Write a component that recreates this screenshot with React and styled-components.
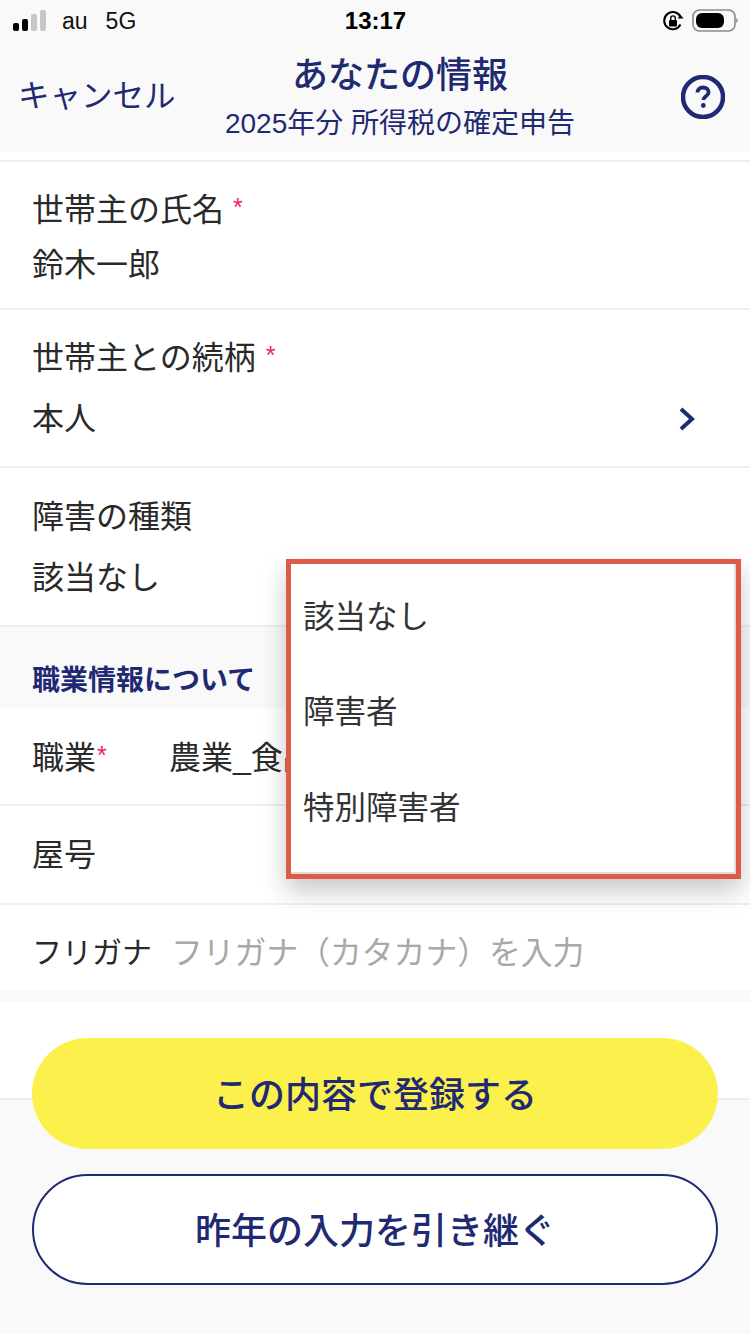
import React from 'react';
import styled, { createGlobalStyle } from 'styled-components';

const navy = '#1f2a72';

const GlobalStyle = createGlobalStyle`
  html, body {
    margin: 0;
    padding: 0;
    background: #f9f9f9;
  }
  body {
    font-family: "Liberation Sans", "Noto Sans CJK JP", sans-serif;
    color: #222;
  }
`;

const Phone = styled.div`
  position: relative;
  width: 750px;
  height: 1334px;
  overflow: hidden;
  background: #f9f9f9;
`;

const StatusBar = styled.div`
  height: 42px;
  padding: 0 12px 0 13px;
  display: grid;
  grid-template-columns: 1fr auto 1fr;
  align-items: center;
`;

const StatusLeft = styled.div`
  display: flex;
  align-items: center;
  font-size: 23px;
  color: #111;
`;

const Carrier = styled.span`
  margin-left: 15px;
`;

const Network = styled.span`
  margin-left: 18px;
`;

const Clock = styled.div`
  font-size: 24px;
  font-weight: 700;
  color: #000;
`;

const StatusRight = styled.div`
  display: flex;
  align-items: center;
  justify-content: flex-end;
  gap: 8px;
`;

const NavBar = styled.div`
  position: relative;
  height: 110px;
`;

const Cancel = styled.div`
  position: absolute;
  left: 18px;
  top: 32px;
  font-size: 31.5px;
  line-height: 44px;
  color: ${navy};
`;

const Titles = styled.div`
  display: flex;
  flex-direction: column;
  align-items: center;
  text-align: center;
  padding-left: 50px;
`;

const Title = styled.div`
  margin-top: 11px;
  font-size: 36px;
  line-height: 46px;
  font-weight: 500;
  color: ${navy};
`;

const Subtitle = styled.div`
  margin-top: 6px;
  font-size: 28px;
  line-height: 38px;
  color: ${navy};
`;

const HelpButton = styled.div`
  position: absolute;
  right: 25px;
  top: 33px;
  width: 44px;
  height: 44px;
`;

const Gap = styled.div`
  height: ${(p) => p.$h}px;
  background: ${(p) => p.$bg || '#fff'};
`;

const Field = styled.div`
  height: ${(p) => p.$h}px;
  padding: 0 32px;
  background: #fff;
  border-top: 2px solid #eeeeee;
  display: flex;
  flex-direction: column;
`;

const FieldLabel = styled.div`
  margin-top: ${(p) => p.$top}px;
  font-size: 32px;
  line-height: 44px;
  color: #2a2a2a;
`;

const FieldValue = styled.div`
  margin-top: ${(p) => p.$top}px;
  font-size: 32px;
  line-height: 44px;
  color: #2a2a2a;
  display: flex;
  align-items: center;
  justify-content: space-between;
`;

const Required = styled.span`
  color: #e8285f;
  font-size: 25px;
  margin-left: ${(p) => p.$gap}px;
  position: relative;
  top: -5px;
`;

const Chevron = styled.svg`
  width: 18px;
  height: 24px;
  margin-right: 22px;
`;

const SectionHead = styled.div`
  height: 81px;
  padding: 0 32px;
  border-top: 2px solid #eeeeee;
  background: #f9f9f9;
  display: flex;
  align-items: flex-end;
  font-size: 28px;
  line-height: 40px;
  font-weight: 700;
  color: ${navy};
`;

const HeadText = styled.span`
  margin-bottom: 7px;
`;

const InlineField = styled.div`
  box-sizing: border-box;
  height: ${(p) => p.$h}px;
  padding: ${(p) => p.$pt || 0}px 32px ${(p) => p.$pb || 0}px;
  background: #fff;
  border-top: ${(p) => (p.$first ? 'none' : '2px solid #eeeeee')};
  display: flex;
  align-items: center;
  font-size: 32px;
  color: #2a2a2a;
`;

const InlineLabel = styled.div`
  width: ${(p) => p.$w}px;
  flex: none;
  white-space: nowrap;
  font-size: ${(p) => p.$size || 32}px;
`;

const Placeholder = styled.div`
  color: #a8a8a8;
  font-size: 31.8px;
  white-space: nowrap;
`;

const Value = styled.div`
  white-space: nowrap;
`;

const Footer = styled.div`
  height: 234px;
  border-top: 2px solid #eeeeee;
  background: #f9f9f9;
`;

const Actions = styled.div`
  position: absolute;
  left: 32px;
  right: 32px;
  top: 1038px;
  display: flex;
  flex-direction: column;
  gap: 25px;
`;

const ActionButton = styled.div`
  box-sizing: border-box;
  height: 111px;
  padding-bottom: 3px;
  border-radius: 56px;
  background: ${(p) => (p.$primary ? '#fcf04d' : '#fff')};
  border: ${(p) => (p.$primary ? 'none' : `2px solid ${navy}`)};
  display: flex;
  align-items: center;
  justify-content: center;
  font-size: 36px;
  font-weight: 500;
  color: ${navy};
`;

const Popup = styled.div`
  position: absolute;
  left: 286px;
  top: 559px;
  width: 455px;
  height: 320px;
  box-sizing: border-box;
  border: 5px solid #dc5c48;
  background: #fff;
  box-shadow: 0 12px 24px rgba(0, 0, 0, 0.22), inset -2px -2px 0 #dddddd;
  padding: 2px 0 0 12px;
  display: flex;
  flex-direction: column;
`;

const PopupItem = styled.div`
  height: 95.5px;
  display: flex;
  align-items: center;
  font-size: 31.5px;
  color: #333;
`;

const SignalBars = () => (
  <svg width="34" height="22" viewBox="0 0 34 22">
    <rect x="0" y="13" width="6" height="8" rx="2" fill="#000" />
    <rect x="9" y="9" width="6" height="12" rx="2" fill="#000" />
    <rect x="18" y="4" width="6" height="17" rx="2" fill="#c6c6c6" />
    <rect x="27" y="0" width="6" height="21" rx="2" fill="#c6c6c6" />
  </svg>
);

const RotationLock = () => (
  <svg width="22" height="22" viewBox="0 0 22 22">
    <path d="M18.5 14.5A8.6 8.6 0 1 1 18.6 7" fill="none" stroke="#000" strokeWidth="2" />
    <path d="M15.6 8.6h6l-3-3.6z" fill="#000" />
    <rect x="7" y="10" width="8" height="6.5" rx="1" fill="#000" />
    <path d="M8.7 10V8.2a2.3 2.3 0 0 1 4.6 0V10" fill="none" stroke="#000" strokeWidth="1.4" />
  </svg>
);

const Battery = () => (
  <svg width="46" height="24" viewBox="0 0 46 24">
    <rect x="1" y="1" width="42" height="21" rx="6.5" fill="none" stroke="#8c8c8c" strokeWidth="1.6" />
    <rect x="4" y="4" width="28" height="15" rx="6" fill="#000" />
    <path d="M44.2 9c1 .4 1.500 1.400 1.500 2.500s-.5 2.100-1.500 2.500z" fill="#8c8c8c" />
  </svg>
);

const HelpIcon = () => (
  <HelpButton>
    <svg width="44" height="44" viewBox="0 0 44 44">
      <circle cx="22" cy="22" r="20" fill="none" stroke={navy} strokeWidth="4.5" />
      <path
        d="M16.500 17.500c0-3 2.300-5 5.500-5s5.600 1.900 5.600 4.700c0 3.900-5.300 4.100-5.300 7.800"
        fill="none"
        stroke={navy}
        strokeWidth="3.800"
      />
      <circle cx="22.300" cy="30.500" r="2.400" fill={navy} />
    </svg>
  </HelpButton>
);

export default function App() {
  return (
    <Phone>
      <GlobalStyle />
      <StatusBar>
        <StatusLeft>
          <SignalBars />
          <Carrier>au</Carrier>
          <Network>5G</Network>
        </StatusLeft>
        <Clock>13:17</Clock>
        <StatusRight>
          <RotationLock />
          <Battery />
        </StatusRight>
      </StatusBar>
      <NavBar>
        <Cancel>キャンセル</Cancel>
        <Titles>
          <Title>あなたの情報</Title>
          <Subtitle>2025年分 所得税の確定申告</Subtitle>
        </Titles>
        <HelpIcon />
      </NavBar>
      <Gap $h={8} />
      <Field $h={146}>
        <FieldLabel $top={26}>
          世帯主の氏名<Required $gap={9}>*</Required>
        </FieldLabel>
        <FieldValue $top={9}>鈴木一郎</FieldValue>
      </Field>
      <Field $h={156}>
        <FieldLabel $top={26}>
          世帯主との続柄<Required $gap={10}>*</Required>
        </FieldLabel>
        <FieldValue $top={15}>
          本人
          <Chevron viewBox="0 0 18 24">
            <path d="M3 2l11 10L3 22" fill="none" stroke={navy} strokeWidth="4" />
          </Chevron>
        </FieldValue>
      </Field>
      <Field $h={157}>
        <FieldLabel $top={27}>障害の種類</FieldLabel>
        <FieldValue $top={17}>該当なし</FieldValue>
      </Field>
      <SectionHead>
        <HeadText>職業情報について</HeadText>
      </SectionHead>
      <InlineField $first $h={96} $pb={2}>
        <InlineLabel $w={137}>
          職業<Required $gap={1}>*</Required>
        </InlineLabel>
        <Value>農業_食品</Value>
      </InlineField>
      <InlineField $h={99} $pb={5}>
        <InlineLabel $w={137}>屋号</InlineLabel>
      </InlineField>
      <InlineField $h={87} $pt={4}>
        <InlineLabel $w={139} $size={30}>
          フリガナ
        </InlineLabel>
        <Placeholder>フリガナ（カタカナ）を入力</Placeholder>
      </InlineField>
      <Gap $h={12} $bg="#f9f9f9" />
      <Gap $h={96} />
      <Footer />
      <Actions>
        <ActionButton $primary>この内容で登録する</ActionButton>
        <ActionButton>昨年の入力を引き継ぐ</ActionButton>
      </Actions>
      <Popup>
        <PopupItem>該当なし</PopupItem>
        <PopupItem>障害者</PopupItem>
        <PopupItem>特別障害者</PopupItem>
      </Popup>
    </Phone>
  );
}
